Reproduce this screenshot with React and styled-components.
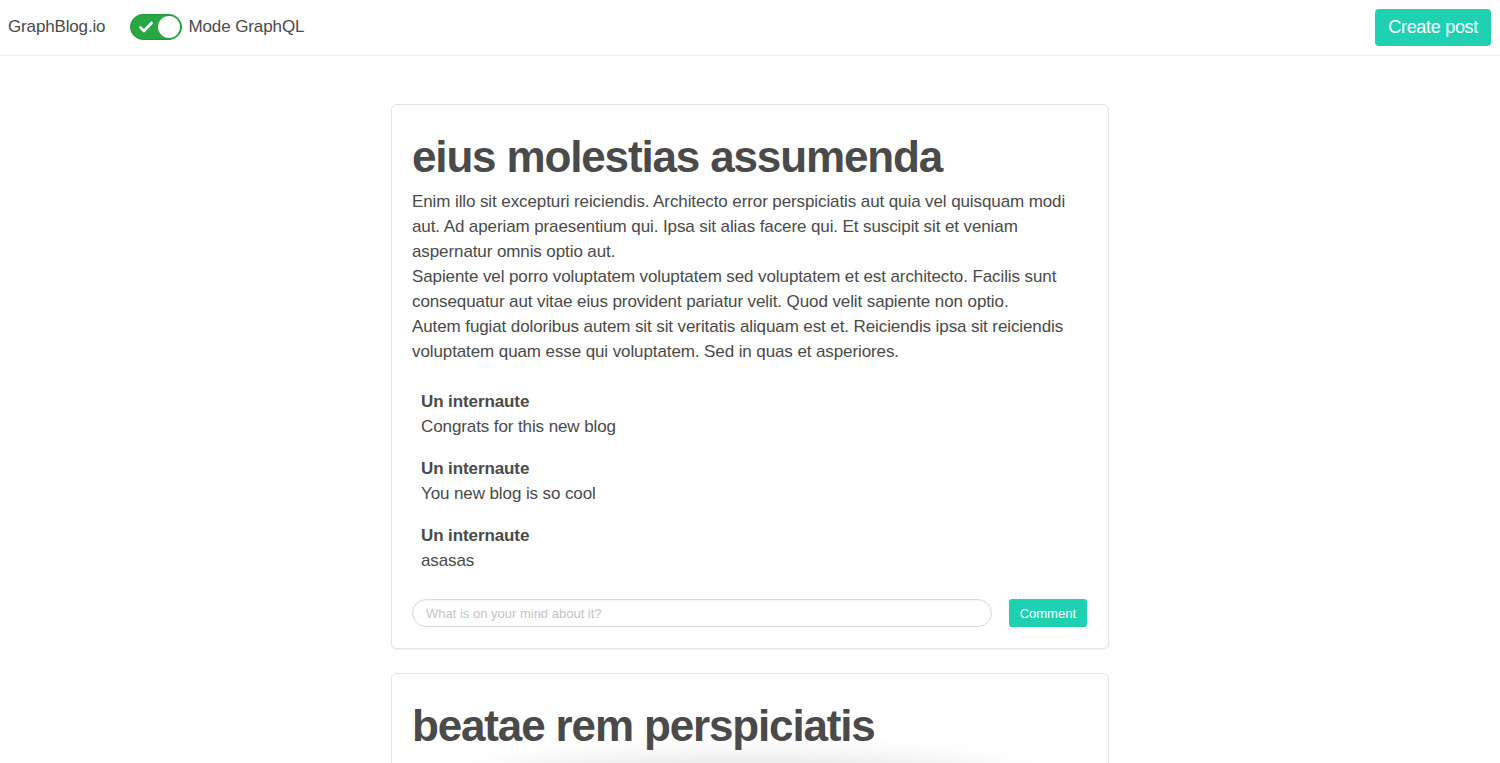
import React from "react";
import styled, { createGlobalStyle } from "styled-components";

const Global = createGlobalStyle`
  html, body { margin: 0; padding: 0; background: #fff; }
  body { font-family: "Liberation Sans", Arial, sans-serif; color: #4a4a4a; }
  * { box-sizing: border-box; }
`;

const Nav = styled.nav`
  height: 56px;
  display: flex;
  align-items: center;
  justify-content: space-between;
  padding: 0 9px 0 8px;
  border-bottom: 2px solid #f5f5f5;
`;

const NavLeft = styled.div`
  display: flex;
  align-items: center;
  gap: 25px;
`;

const Brand = styled.span`
  font-size: 17px;
  letter-spacing: -0.15px;
  color: #4a4a4a;
`;

const ToggleWrap = styled.label`
  display: flex;
  align-items: center;
  gap: 6px;
  font-size: 17px;
  letter-spacing: -0.1px;
  color: #4a4a4a;
`;

const Switch = styled.span`
  position: relative;
  width: 52px;
  height: 26px;
  border-radius: 13px;
  background: #28a745;
  border: 1px solid #23953d;
  display: flex;
  align-items: center;
  padding-left: 8px;
`;

const Knob = styled.span`
  position: absolute;
  right: 1px;
  top: 1px;
  width: 22px;
  height: 22px;
  border-radius: 50%;
  background: #fff;
`;

const PrimaryButton = styled.button`
  background: #1fd1b0;
  color: #fff;
  border: none;
  border-radius: ${(p) => (p.$small ? "3px" : "4px")};
  font-family: inherit;
  font-size: ${(p) => (p.$small ? "13px" : "18px")};
  height: ${(p) => (p.$small ? "28px" : "37px")};
  padding: ${(p) => (p.$small ? "0 11px" : "0 13px")};
  letter-spacing: ${(p) => (p.$small ? "0" : "-0.3px")};
  cursor: pointer;
  flex-shrink: 0;
`;

const Main = styled.main`
  display: flex;
  flex-direction: column;
  align-items: center;
  gap: 24px;
  padding-top: 48px;
`;

const Card = styled.article`
  width: 718px;
  border: 1px solid #e3e3e3;
  border-radius: 6px;
  box-shadow: 0 1px 2px rgba(10, 10, 10, 0.06);
  padding: 23px 21px 21px 20px;
  background: #fff;
  overflow: hidden;
`;

const Title = styled.h1`
  margin: 0;
  font-size: 44px;
  letter-spacing: -1.15px;
  line-height: 58px;
  font-weight: 700;
  color: #4a4a4a;
`;

const Body = styled.div`
  margin-top: 3px;
  font-size: 17px;
  letter-spacing: -0.1px;
  line-height: 25px;
`;

const Para = styled.p`
  margin: 0;
`;

const Comments = styled.div`
  display: flex;
  flex-direction: column;
  gap: 17px;
  padding-left: 9px;
  margin-top: 25px;
`;

const Comment = styled.div`
  font-size: 17px;
  letter-spacing: -0.1px;
  line-height: 25px;
`;

const Author = styled.div`
  font-weight: 700;
`;

const Form = styled.form`
  display: flex;
  align-items: center;
  gap: 17px;
  margin-top: 26px;
`;

const Input = styled.input`
  flex: 1;
  height: 28px;
  border: 1px solid #dbdbdb;
  border-radius: 14px;
  padding: 0 13px;
  font-family: inherit;
  font-size: 13px;
  color: #4a4a4a;
  outline: none;
  box-shadow: inset 0 1px 2px rgba(10, 10, 10, 0.05);
  &::placeholder { color: #c4c4c4; }
`;

const Shade = styled.div`
  height: 60px;
  margin: 22px 50px 0;
  border-radius: 50%;
  box-shadow: 0 -8px 30px 8px rgba(0, 0, 0, 0.14);
`;

const Check = () => (
  <svg width="14" height="12" viewBox="0 0 14 12">
    <path d="M1.5 6.5 L5 10 L12.5 2" fill="none" stroke="#fff" strokeWidth="2.6" strokeLinecap="round" strokeLinejoin="round" />
  </svg>
);

const comments = [
  "Congrats for this new blog",
  "You new blog is so cool",
  "asasas",
];

export default function App() {
  return (
    <>
      <Global />
      <Nav>
        <NavLeft>
          <Brand>GraphBlog.io</Brand>
          <ToggleWrap>
            <Switch>
              <Check />
              <Knob />
            </Switch>
            Mode GraphQL
          </ToggleWrap>
        </NavLeft>
        <PrimaryButton>Create post</PrimaryButton>
      </Nav>
      <Main>
        <Card>
          <Title>eius molestias assumenda</Title>
          <Body>
            <Para>
              Enim illo sit excepturi reiciendis. Architecto error perspiciatis aut quia vel quisquam modi aut. Ad aperiam praesentium qui. Ipsa sit alias facere qui. Et suscipit sit et veniam aspernatur omnis optio aut.
            </Para>
            <Para>
              Sapiente vel porro voluptatem voluptatem sed voluptatem et est architecto. Facilis sunt consequatur aut vitae eius provident pariatur velit. Quod velit sapiente non optio.
            </Para>
            <Para>
              Autem fugiat doloribus autem sit sit veritatis aliquam est et. Reiciendis ipsa sit reiciendis voluptatem quam esse qui voluptatem. Sed in quas et asperiores.
            </Para>
          </Body>
          <Comments>
            {comments.map((c, i) => (
              <Comment key={i}>
                <Author>Un internaute</Author>
                <div>{c}</div>
              </Comment>
            ))}
          </Comments>
          <Form onSubmit={(e) => e.preventDefault()}>
            <Input placeholder="What is on your mind about it?" />
            <PrimaryButton $small type="submit">Comment</PrimaryButton>
          </Form>
        </Card>
        <Card>
          <Title>beatae rem perspiciatis</Title>
          <Shade />
        </Card>
      </Main>
    </>
  );
}
